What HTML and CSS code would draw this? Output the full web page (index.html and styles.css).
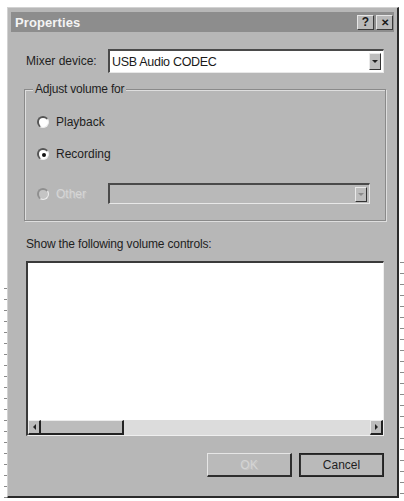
FILE: index.html
```html
<!DOCTYPE html>
<html>
<head>
<meta charset="utf-8">
<link rel="stylesheet" href="styles.css">
</head>
<body>
<div class="dialog">
  <div class="titlebar">
    <span class="title">Properties</span>
    <span class="tbtns">
      <span class="tbtn">?</span>
      <span class="tbtn close">&#x2715;</span>
    </span>
  </div>
  <div class="content">
    <div class="mixer-row">
      <span class="mixer-label">Mixer device:</span>
      <div class="combo">
        <span class="combo-text">USB Audio CODEC</span>
        <span class="drop"><span class="arrow"></span></span>
      </div>
    </div>
    <div class="group">
      <span class="group-label">Adjust volume for</span>
      <div class="radio-row">
        <span class="radio"></span><span class="rlabel">Playback</span>
      </div>
      <div class="radio-row">
        <span class="radio checked"></span><span class="rlabel">Recording</span>
      </div>
      <div class="radio-row other-row">
        <span class="radio disabled"></span><span class="rlabel disabled-text other-label">Other</span>
        <div class="combo combo-disabled">
          <span class="combo-text"></span>
          <span class="drop"><span class="arrow arrow-disabled"></span></span>
        </div>
      </div>
    </div>
    <div class="show-label">Show the following volume controls:</div>
    <div class="listbox">
      <div class="list-area"></div>
      <div class="hscroll">
        <span class="sbtn"><span class="larrow"></span></span>
        <span class="thumb"></span>
        <span class="track"></span>
        <span class="sbtn"><span class="rarrow"></span></span>
      </div>
    </div>
    <div class="buttons">
      <span class="btn btn-disabled">OK</span>
      <span class="btn btn-default">Cancel</span>
    </div>
  </div>
</div>
</body>
</html>
```
FILE: styles.css
```css
html, body {
  margin: 0;
  padding: 0;
}
body {
  width: 404px;
  height: 501px;
  overflow: hidden;
  background-color: #fff;
  background-image:
    repeating-linear-gradient(to bottom, #8a8a8a 0 1px, transparent 1px 11px),
    repeating-linear-gradient(to bottom, #8a8a8a 0 1px, transparent 1px 11px);
  background-size: 3px 210px, 4px 240px;
  background-position: 4px 288px, 400px 262px;
  background-repeat: no-repeat;
  font-family: "Liberation Sans", Arial, sans-serif;
  font-size: 12px;
  color: #1e1e1e;
}
.dialog {
  margin: 7px 0 0 7px;
  width: 392px;
  height: 491px;
  box-sizing: border-box;
  background: #b7b7b7;
  border-top: 1px solid #d2d2d2;
  border-left: 1px solid #d2d2d2;
  border-right: 2px solid #2a2a2a;
  border-bottom: 2px solid #2a2a2a;
  padding: 4px 3px 0 3px;
  display: flex;
  flex-direction: column;
}
.titlebar {
  height: 20px;
  background: #8d8d8d;
  display: flex;
  align-items: center;
  justify-content: space-between;
  padding: 0 1px 0 4px;
}
.title {
  color: #f4f4f4;
  font-weight: bold;
  font-size: 13px;
  letter-spacing: 0.1px;
}
.tbtns {
  display: flex;
  gap: 2px;
}
.tbtn {
  width: 17px;
  height: 15px;
  box-sizing: border-box;
  background: #b9b9b9;
  border-top: 1px solid #e6e6e6;
  border-left: 1px solid #e6e6e6;
  border-right: 1px solid #3a3a3a;
  border-bottom: 1px solid #3a3a3a;
  font-weight: bold;
  font-size: 12px;
  line-height: 13px;
  text-align: center;
  color: #1a1a1a;
}
.tbtn.close {
  font-size: 10px;
}
.content {
  padding: 0 8px 0 13px;
  display: flex;
  flex-direction: column;
}
.mixer-row {
  margin-top: 17px;
  display: flex;
  align-items: center;
  padding-left: 2px;
  height: 24px;
}
.mixer-label {
  width: 82px;
}
.combo {
  width: 276px;
  height: 24px;
  box-sizing: border-box;
  background: #fff;
  border-top: 2px solid #4a4a4a;
  border-left: 2px solid #4a4a4a;
  border-right: 1px solid #e8e8e8;
  border-bottom: 1px solid #e8e8e8;
  display: flex;
  align-items: center;
  justify-content: space-between;
  padding: 0 2px 0 2px;
}
.combo-text {
  font-size: 12.5px;
  letter-spacing: -0.3px;
  color: #1a1a1a;
}
.drop {
  width: 12px;
  height: 17px;
  box-sizing: border-box;
  background: #bdbdbd;
  border-top: 1px solid #eaeaea;
  border-left: 1px solid #eaeaea;
  border-right: 1px solid #333;
  border-bottom: 1px solid #333;
  display: flex;
  align-items: center;
  justify-content: center;
}
.arrow {
  width: 0;
  height: 0;
  border-left: 3px solid transparent;
  border-right: 3px solid transparent;
  border-top: 3px solid #222;
}
.arrow-disabled {
  border-top-color: #8a8a8a;
}
.group {
  position: relative;
  margin-top: 16px;
  height: 132px;
  box-sizing: border-box;
  border: 1px solid #8a8a8a;
  box-shadow: inset 1px 1px 0 #dedede, 1px 1px 0 #dedede;
  padding: 22px 0 0 12px;
  display: flex;
  flex-direction: column;
}
.group-label {
  position: absolute;
  top: -8px;
  left: 8px;
  padding: 0 2px;
  background: #b7b7b7;
  letter-spacing: -0.2px;
}
.radio-row {
  display: flex;
  align-items: center;
  height: 20px;
  margin-bottom: 12px;
}
.radio {
  width: 12px;
  height: 12px;
  box-sizing: border-box;
  border-radius: 50%;
  background: #fff;
  border-top: 2px solid #555;
  border-left: 2px solid #555;
  border-right: 1px solid #eee;
  border-bottom: 1px solid #eee;
  display: flex;
  align-items: center;
  justify-content: center;
  margin-right: 7px;
}
.radio.checked::after {
  content: "";
  width: 4px;
  height: 4px;
  border-radius: 50%;
  background: #111;
}
.radio.disabled {
  background: #c4c4c4;
  border-top-color: #8f8f8f;
  border-left-color: #8f8f8f;
}
.rlabel {
  font-size: 12px;
}
.disabled-text {
  color: #d6d6d6;
  text-shadow: 1px 1px 0 #c4c4c4;
}
.other-row {
  margin-top: 7px;
  height: 21px;
}
.other-label {
  width: 52px;
}
.combo-disabled {
  width: 262px;
  height: 21px;
  background: #b9b9b9;
}
.combo-disabled .drop {
  height: 15px;
}
.show-label {
  margin-top: 16px;
  padding-left: 2px;
  line-height: 14px;
  letter-spacing: -0.15px;
}
.listbox {
  margin: 10px 2px 0 2px;
  height: 175px;
  box-sizing: border-box;
  background: #fff;
  border-top: 2px solid #3a3a3a;
  border-left: 2px solid #3a3a3a;
  border-right: 1px solid #efefef;
  border-bottom: 1px solid #efefef;
  display: flex;
  flex-direction: column;
}
.list-area {
  flex: 1;
}
.hscroll {
  height: 15px;
  display: flex;
  background: #dcdcdc;
}
.sbtn {
  width: 13px;
  height: 15px;
  box-sizing: border-box;
  background: #bcbcbc;
  border-top: 1px solid #ececec;
  border-left: 1px solid #ececec;
  border-right: 2px solid #222;
  border-bottom: 2px solid #222;
  display: flex;
  align-items: center;
  justify-content: center;
}
.larrow {
  width: 0;
  height: 0;
  border-top: 3px solid transparent;
  border-bottom: 3px solid transparent;
  border-right: 3px solid #222;
}
.rarrow {
  width: 0;
  height: 0;
  border-top: 3px solid transparent;
  border-bottom: 3px solid transparent;
  border-left: 3px solid #222;
}
.thumb {
  width: 83px;
  height: 15px;
  box-sizing: border-box;
  background: #bcbcbc;
  border-top: 1px solid #ececec;
  border-right: 2px solid #222;
  border-bottom: 2px solid #222;
}
.track {
  flex: 1;
}
.buttons {
  margin: 17px 2px 0 0;
  display: flex;
  justify-content: flex-end;
  gap: 7px;
}
.btn {
  width: 85px;
  height: 24px;
  box-sizing: border-box;
  background: #bababa;
  display: flex;
  align-items: center;
  justify-content: center;
  border-top: 1px solid #e6e6e6;
  border-left: 1px solid #e6e6e6;
  border-right: 2px solid #2e2e2e;
  border-bottom: 2px solid #2e2e2e;
}
.btn-disabled {
  color: #d4d4d4;
  text-shadow: 1px 1px 0 #c6c6c6;
}
.btn-default {
  outline: 1px solid #222;
  outline-offset: -1px;
  border-top: 2px solid #333;
  border-left: 2px solid #333;
  color: #1e1e1e;
}
```
